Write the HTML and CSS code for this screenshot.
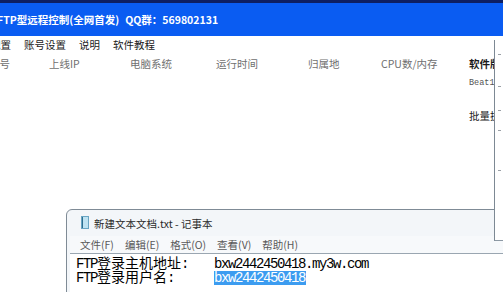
FILE: index.html
```html
<!DOCTYPE html>
<html lang="zh-CN">
<head>
<meta charset="utf-8">
<title>FTP型远程控制</title>
<link rel="stylesheet" href="styles.css">
</head>
<body>
<div class="app">
  <div class="topstrip"></div>
  <div class="titlebar"><span class="title">FTP型远程控制(全网首发)<span class="gap"></span>QQ群：569802131</span></div>
  <div class="work">
    <div class="main">
      <div class="menubar">
        <span>配置</span><span>账号设置</span><span>说明</span><span>软件教程</span>
      </div>
      <div class="content">
        <div class="list">
          <div class="head">
            <span>帐号</span><span>上线IP</span><span>电脑系统</span><span>运行时间</span><span>归属地</span><span>CPU数/内存</span>
          </div>
        </div>
        <div class="side">
          <div class="side-title">软件版本</div>
          <div class="side-ver">Beat1.0</div>
          <div class="side-act">批量执行</div>
        </div>
      </div>
    </div>
    <div class="strip">
      <span class="mark m1"></span>
      <span class="mark m2"></span>
      <span class="mark m3"></span>
      <span class="mark m4"></span>
      <span class="mark m5"></span>
    </div>
  </div>

  <div class="notepad">
    <div class="np-title">
      <svg class="np-icon" width="8" height="13" viewBox="0 0 8 13">
        <rect x="0.5" y="0.5" width="7" height="12" fill="#bfe3f2" stroke="#6aa6c4"/>
        <line x1="1.5" y1="1" x2="1.5" y2="12" stroke="#2d6e90" stroke-width="1"/>
      </svg>
      <span>新建文本文档.txt - 记事本</span>
    </div>
    <div class="np-menu">
      <span>文件(F)</span><span>编辑(E)</span><span>格式(O)</span><span>查看(V)</span><span>帮助(H)</span>
    </div>
    <div class="np-edit">
      <div class="line"><span class="lbl">FTP<span class="cjk">登录主机地址</span>:</span><span class="val">bxw2442450418.my3w.com</span></div>
      <div class="line"><span class="lbl">FTP<span class="cjk">登录用户名</span>:</span><span class="val"><span class="sel">bxw2442450418</span></span></div>
    </div>
  </div>
</div>
</body>
</html>
```

FILE: styles.css
```css
html, body {
  margin: 0;
  padding: 0;
  background: #ffffff;
}

body {
  width: 503px;
  height: 292px;
  overflow: hidden;
  font-family: "Noto Sans CJK SC", "Noto Sans", sans-serif;
}

.app {
  position: relative;
  width: 503px;
  height: 292px;
  overflow: hidden;
}

.topstrip {
  height: 3px;
  background: #0e1f63;
}

.titlebar {
  height: 33px;
  background: #0a5cf2;
  display: flex;
  align-items: center;
  overflow: hidden;
}

.title {
  margin-left: -3px;
  color: #ffffff;
  font-weight: 700;
  font-size: 10.5px;
  white-space: nowrap;
  line-height: 14px;
}

.gap {
  display: inline-block;
  width: 6px;
}

.work {
  display: flex;
  height: 256px;
}

.main {
  flex: 1;
  overflow: hidden;
  background: #ffffff;
}

.menubar {
  height: 16px;
  margin-top: 1px;
  display: flex;
  gap: 13px;
  align-items: center;
  margin-left: -10px;
  font-size: 10.5px;
  color: #1a1a1a;
  white-space: nowrap;
  line-height: 16px;
}

.content {
  display: flex;
  margin-left: -11px;
  margin-top: 3px;
}

.list {
  width: 480px;
  flex: none;
}

.head {
  display: grid;
  grid-template-columns: 60px 81px 86px 92px 73px 87px;
  font-size: 10.5px;
  color: #707070;
  line-height: 16px;
  white-space: nowrap;
}

.side {
  white-space: nowrap;
  width: 60px;
  flex: none;
}

.side-title {
  font-size: 10.5px;
  line-height: 16px;
  color: #1a1a1a;
  font-weight: 700;
}

.side-ver {
  margin-top: 5px;
  font-family: "Liberation Mono", monospace;
  font-size: 8.5px;
  line-height: 12px;
  color: #555;
}

.side-act {
  margin-top: 19px;
  font-size: 10.5px;
  line-height: 16px;
  color: #1a1a1a;
}

.strip {
  position: relative;
  z-index: 2;
  width: 8px;
  margin-top: 4px;
  height: 200px;
  background: #ffffff;
  border-left: 1px solid #7d8994;
  border-bottom: 1px solid #8d99a4;
}

.mark {
  position: absolute;
  left: 3px;
  width: 3px;
  height: 1px;
  background: #9aa0a6;
}
.m1 { top: 14px; }
.m2 { top: 46px; }
.m3 { top: 70px; }
.m4 { top: 90px; }
.m5 { top: 130px; }

.notepad {
  position: absolute;
  left: 66px;
  top: 209px;
  width: 460px;
  height: 100px;
  border: 1px solid #7f8b96;
  border-radius: 6px 6px 0 0;
  background: #f3f6f9;
  box-sizing: border-box;
  padding: 0 0 0 3px;
}

.np-title {
  height: 26px;
  display: flex;
  align-items: center;
  gap: 5px;
  padding-left: 11px;
  font-size: 10.5px;
  color: #2a2a2a;
  white-space: nowrap;
}

.np-icon {
  flex: none;
  margin-top: -1px;
}

.np-menu {
  height: 17px;
  display: flex;
  align-items: center;
  gap: 11px;
  padding-left: 10px;
  font-size: 10.5px;
  color: #5a5a5a;
  white-space: nowrap;
  border-bottom: 1px solid #9aa6b1;
  background: #f7f9fb;
}

.np-edit {
  background: #ffffff;
  height: 60px;
  padding: 1px 0 0 6px;
}

.line {
  height: 14px;
  line-height: 14px;
  white-space: nowrap;
  font-family: "Liberation Mono", monospace;
  font-size: 14px;
  letter-spacing: -1.4px;
  color: #000;
}

.cjk {
  font-family: "Noto Sans CJK SC", sans-serif;
  letter-spacing: 0;
  font-size: 14px;
}

.lbl {
  display: inline-block;
  width: 138px;
}

.val {
  display: inline-block;
}

.sel {
  background: #3c9cf0;
  color: #ffffff;
  display: inline-block;
  padding-right: 1px;
}
```
